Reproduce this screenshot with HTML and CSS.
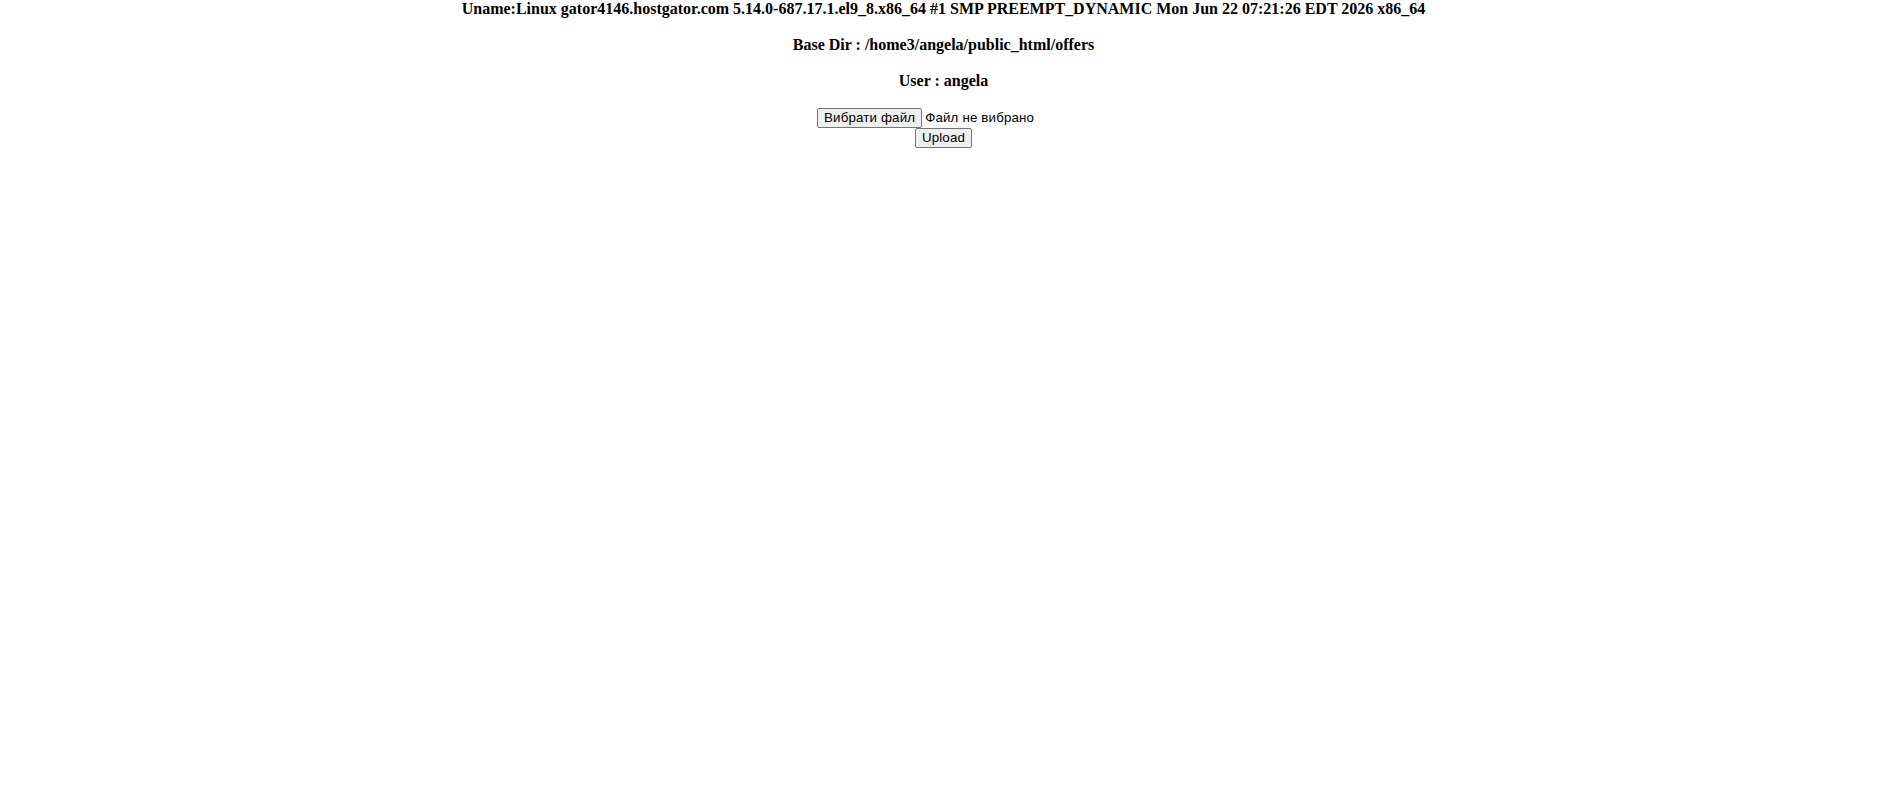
FILE: index.html
```html
<!DOCTYPE html>
<html>
<head>
<meta charset="utf-8">
<title>Upload</title>
<link rel="stylesheet" href="styles.css">
</head>
<body>
<div class="page">
  <div class="info">Uname:Linux gator4146.hostgator.com 5.14.0-687.17.1.el9_8.x86_64 #1 SMP PREEMPT_DYNAMIC Mon Jun 22 07:21:26 EDT 2026 x86_64</div>
  <div class="info">Base Dir : /home3/angela/public_html/offers</div>
  <div class="info">User : angela</div>
  <form class="upload-form">
    <div class="file-row">
      <div class="file-input">
        <button type="button" class="btn">Вибрати файл</button>
        <span class="file-label">Файл не вибрано</span>
      </div>
    </div>
    <div class="submit-row">
      <button type="button" class="btn">Upload</button>
    </div>
  </form>
</div>
</body>
</html>
```

FILE: styles.css
```css
html, body {
  margin: 0;
  padding: 0;
  background: #ffffff;
}

.page {
  text-align: center;
  font-family: "Liberation Serif", "Times New Roman", serif;
  font-size: 16px;
  font-weight: bold;
  color: #000000;
}

.info {
  line-height: 18px;
  height: 18px;
  margin-bottom: 18px;
}

.info:last-of-type {
  margin-bottom: 17px;
}

.upload-form {
  margin: 0;
  font-family: "Liberation Sans", Arial, sans-serif;
  font-size: 13.333px;
  font-weight: normal;
  letter-spacing: 0.15px;
}

.file-row {
  display: flex;
  justify-content: center;
  height: 21px;
}

.file-input {
  width: 253px;
  display: flex;
  align-items: center;
  gap: 3px;
  text-align: left;
}

.file-label {
  color: #000000;
  white-space: nowrap;
}

.submit-row {
  display: flex;
  justify-content: center;
  height: 21px;
}

.btn {
  font-family: "Liberation Sans", Arial, sans-serif;
  font-size: 13.333px;
  letter-spacing: 0.15px;
  color: #000000;
  background: #efefef;
  border: 1px solid #767676;
  border-radius: 2px;
  padding: 1px 6px;
  margin: 0;
  height: 20px;
  line-height: 16px;
  box-sizing: border-box;
  white-space: nowrap;
}
```
